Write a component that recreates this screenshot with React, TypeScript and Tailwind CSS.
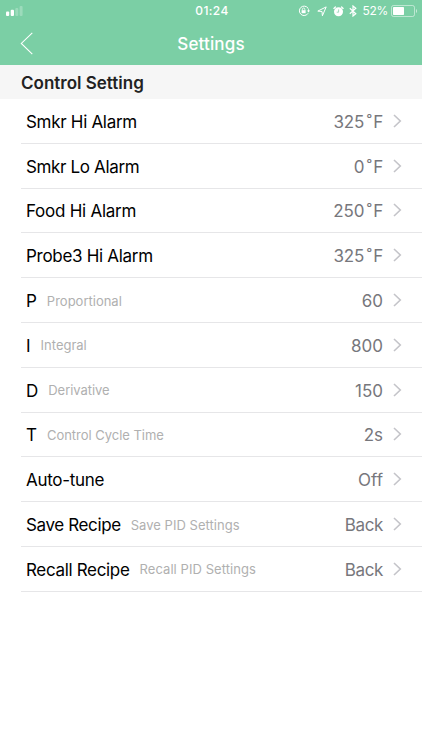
type Setting = {
  label: string;
  hint?: string;
  value: string;
  degrees?: boolean;
  labelClass: string;
  hintClass?: string;
  valueClass?: string;
};

const settings: Setting[] = [
  { label: 'Smkr Hi Alarm', value: '325', degrees: true, labelClass: 'tracking-[-0.3px]', valueClass: 'tracking-[-0.2px]' },
  { label: 'Smkr Lo Alarm', value: '0', degrees: true, labelClass: 'tracking-[-0.35px]', valueClass: 'tracking-[-0.2px]' },
  { label: 'Food Hi Alarm', value: '250', degrees: true, labelClass: 'tracking-[-0.25px]', valueClass: 'tracking-[-0.2px]' },
  { label: 'Probe3 Hi Alarm', value: '325', degrees: true, labelClass: 'tracking-[-0.3px]', valueClass: 'tracking-[-0.2px]' },
  { label: 'P', hint: 'Proportional', value: '60', labelClass: '' },
  { label: 'I', hint: 'Integral', value: '800', labelClass: '' },
  { label: 'D', hint: 'Derivative', value: '150', labelClass: '', hintClass: 'tracking-[-0.05px]' },
  { label: 'T', hint: 'Control Cycle Time', value: '2s', labelClass: '', hintClass: 'tracking-[-0.03px]' },
  { label: 'Auto-tune', value: 'Off', labelClass: 'tracking-[-0.3px]' },
  { label: 'Save Recipe', hint: 'Save PID Settings', value: 'Back', labelClass: 'tracking-[-0.38px]', hintClass: 'tracking-[0.03px]', valueClass: 'tracking-[-0.35px]' },
  { label: 'Recall Recipe', hint: 'Recall PID Settings', value: 'Back', labelClass: 'tracking-[-0.33px]', hintClass: 'tracking-[0.07px]', valueClass: 'tracking-[-0.35px]' },
];

function StatusBar() {
  return (
    <div className="flex h-[22px] items-center pl-1.5 pr-1 text-white">
      <div className="flex flex-1">
        <svg width="17" height="11" viewBox="0 0 17 11" fill="currentColor">
          <rect x="0" y="5.6" width="3.2" height="4.4" rx="1" />
          <rect x="4.7" y="3.8" width="3.3" height="6.2" rx="1" />
          <rect x="9.3" y="2" width="3" height="8" rx="1" opacity=".25" />
          <rect x="13.6" y="0" width="3" height="10" rx="1" opacity=".25" />
        </svg>
      </div>
      <span className="text-[12px] font-medium leading-[22px] tracking-[0.4px]">01:24</span>
      <div className="flex flex-1 items-center justify-end">
        <svg className="mr-[7px]" width="12" height="12" viewBox="0 0 12 12" fill="none" stroke="currentColor">
          <path d="M10 3.2A4.7 4.7 0 1 0 10.1 8.3M10.2 3.5A4.7 4.7 0 0 1 10.6 6" strokeWidth="1" />
          <path d="M9 5.6h3l-1.5 1.9z" fill="currentColor" stroke="none" />
          <path d="M4.4 5.4V4.2a1.2 1.2 0 0 1 2.4 0v1.2" strokeWidth=".8" />
          <rect x="3.6" y="5.2" width="4" height="3" fill="currentColor" stroke="none" />
        </svg>
        <svg className="mr-[6px]" width="10" height="11" viewBox="0 0 10 11" fill="none" stroke="currentColor" strokeWidth="1" strokeLinejoin="round">
          <path d="M9.2.9.8 5.1 5 5.5 5.4 9.8z" />
        </svg>
        <svg className="mr-[5px]" width="11" height="11" viewBox="0 0 11 11">
          <circle cx="5.5" cy="5.8" r="4.5" fill="currentColor" />
          <path d="M.9 2.4 2.4 1M10.1 2.4 8.6 1" stroke="currentColor" strokeWidth="1.3" strokeLinecap="round" />
          <path d="M5.6 3.4v2.8H3.7" fill="none" stroke="#7bcfa5" strokeWidth=".7" />
        </svg>
        <svg className="mr-[6px]" width="8" height="12" viewBox="0 0 8 12" fill="none" stroke="currentColor" strokeWidth="1.2">
          <path d="m.8 3.2 6 5.5L4 11V1l2.8 2.3-6 5.5" />
        </svg>
        <span className="mr-[3px] text-[12px] leading-[22px] tracking-[-0.3px]">52%</span>
        <svg width="27" height="12" viewBox="0 0 27 12">
          <rect x=".5" y=".5" width="23" height="11" rx="2" fill="none" stroke="currentColor" opacity=".5" />
          <rect x="2" y="2" width="11" height="8" rx=".7" fill="currentColor" />
          <path d="M25 4c1.4.5 1.4 3.5 0 4z" fill="currentColor" opacity=".6" />
        </svg>
      </div>
    </div>
  );
}

function NavBar() {
  return (
    <div className="grid h-[43px] grid-cols-[1fr_auto_1fr] items-center text-white">
      <svg className="ml-5" width="14" height="24" viewBox="0 0 14 24" fill="none" stroke="currentColor" strokeWidth="1.1">
        <path d="M12.3.8 1.3 11.4l11 10.8" />
      </svg>
      <h1 className="text-[17px] font-medium leading-6 tracking-[0.15px]">Settings</h1>
    </div>
  );
}

function SettingRow({ item }: { item: Setting }) {
  return (
    <li className="flex h-[44.8px] items-center border-b border-[#e6e6e8] pl-[5px] pr-5">
      <span className={`pt-[2px] text-[17px] leading-6 text-black ${item.labelClass}`}>{item.label}</span>
      {item.hint && (
        <span className={`ml-2.5 pt-px text-[13px] leading-6 text-[#b0b0b0] ${item.hintClass ?? ''}`}>{item.hint}</span>
      )}
      <span className={`ml-auto flex pt-[2px] text-[17px] leading-6 text-[#77777c] ${item.valueClass ?? ''}`}>
        <span>{item.value}</span>
        {item.degrees && <span className="ml-0.5 mr-px w-[6px] text-center">˚</span>}
        {item.degrees && <span>F</span>}
      </span>
      <svg className="ml-[10px]" width="9" height="14" viewBox="0 0 9 14" fill="none" stroke="#c4c4c9" strokeWidth="1.6">
        <path d="m1 1 6.3 6L1 13" />
      </svg>
    </li>
  );
}

export default function App() {
  return (
    <div className="h-[750px] w-[422px] overflow-hidden bg-white font-['Inter','Liberation_Sans',sans-serif]">
      <header className="h-[65px] bg-[#7bcfa5]">
        <StatusBar />
        <NavBar />
      </header>
      <main>
        <h2 className="flex h-[34px] items-center bg-[#f6f6f6] pl-[21px] pt-[3px] text-[17px] font-semibold tracking-[0px] text-[#222]">
          Control Setting
        </h2>
        <ul className="ml-[21px]">
          {settings.map((item) => (
            <SettingRow key={item.label} item={item} />
          ))}
        </ul>
      </main>
    </div>
  );
}
